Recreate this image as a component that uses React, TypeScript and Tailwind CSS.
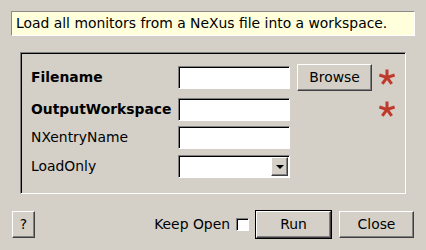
const raised = "bg-[#d4d0c8] border border-t-white border-l-white border-r-[#404040] border-b-[#404040] shadow-[inset_-1px_-1px_0_#808080]";
const sunken = "bg-white border border-t-[#808080] border-l-[#808080] border-r-white border-b-white shadow-[inset_1px_1px_0_#000]";

function Asterisk() {
  const arms = [-90, -18, 54, 126, 198];
  return (
    <svg width="18" height="18" viewBox="0 0 18 18" className="shrink-0">
      {arms.map(a => {
        const r = (a * Math.PI) / 180;
        return (
          <line
            key={a}
            x1="9" y1="9.5"
            x2={9 + Math.cos(r) * 8} y2={9.5 + Math.sin(r) * 8}
            stroke="#bf3a2b" strokeWidth="3" strokeLinecap="butt"
          />
        );
      })}
    </svg>
  );
}

function Field({ combo }: { combo?: boolean }) {
  return (
    <div className={`w-[112px] h-[23px] flex items-stretch justify-end ${sunken}`}>
      {combo && (
        <div className={`w-[17px] my-[1px] mr-[1px] ml-[1px] flex items-center justify-center ${raised}`}>
          <div className="w-0 h-0 border-l-[4px] border-r-[4px] border-t-[4px] border-l-transparent border-r-transparent border-t-black" />
        </div>
      )}
    </div>
  );
}

export default function App() {
  return (
    <div
      className="w-[426px] h-[250px] bg-[#d4d0c8] text-black text-[13.9px] flex flex-col overflow-hidden"
      style={{ fontFamily: '"DejaVu Sans", sans-serif' }}
    >
      <div className="mx-[11px] mt-[11px] h-[25px] bg-[#ffffdc] border border-t-[#8a8a8a] border-l-[#8a8a8a] border-r-white border-b-white flex items-center px-[4px]">
        Load all monitors from a NeXus file into a workspace.
      </div>

      <div className="ml-[20px] mt-[16px] w-[386px] h-[142px] border border-t-[#808080] border-l-[#808080] border-r-white border-b-white shadow-[inset_1px_1px_0_#000] pl-[10px] pt-[11px] flex flex-col">
        <div className="flex items-center h-[26px]">
          <span className="w-[147px] font-bold">Filename</span>
          <Field />
          <button className={`ml-[7px] w-[75px] h-[27px] ${raised}`}>Browse</button>
          <span className="ml-[6px]"><Asterisk /></span>
        </div>
        <div className="flex items-center h-[24px] mt-[7px]">
          <span className="w-[147px] font-bold">OutputWorkspace</span>
          <Field />
          <span className="ml-[88px]"><Asterisk /></span>
        </div>
        <div className="flex items-center h-[23px] mt-[5px]">
          <span className="w-[147px]">NXentryName</span>
          <Field />
        </div>
        <div className="flex items-center h-[23px] mt-[6px]">
          <span className="w-[147px]">LoadOnly</span>
          <Field combo />
        </div>
      </div>

      <div className="flex items-center mt-[16px] pl-[12px] pr-[12px]">
        <button className={`w-[23px] h-[27px] ${raised}`}>?</button>
        <div className="ml-auto flex items-center">
          <span>Keep Open</span>
          <div className="ml-[6px] w-[13px] h-[13px] bg-white border border-t-[#808080] border-l-[#808080] border-r-white border-b-white shadow-[inset_1px_1px_0_#000]" />
          <div className="ml-[6px] border border-black">
            <button className={`w-[75px] h-[27px] ${raised}`}>Run</button>
          </div>
          <button className={`ml-[7px] w-[75px] h-[27px] ${raised}`}>Close</button>
        </div>
      </div>
    </div>
  );
}
